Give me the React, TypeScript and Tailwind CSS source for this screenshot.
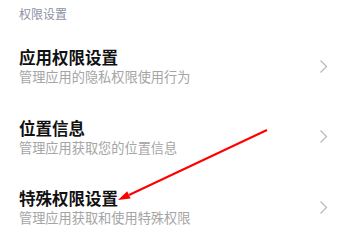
const rows = [
  { title: "应用权限设置", desc: "管理应用的隐私权限使用行为" },
  { title: "位置信息", desc: "管理应用获取您的位置信息" },
  { title: "特殊权限设置", desc: "管理应用获取和使用特殊权限" },
];

function Chevron() {
  return (
    <svg width="9" height="15" viewBox="0 0 9 15" className="shrink-0">
      <polyline points="1.5,1.5 7.5,7.5 1.5,13.5" fill="none" stroke="#b8b8b8" strokeWidth="1.2" />
    </svg>
  );
}

export default function App() {
  return (
    <div
      className="relative w-[344px] h-[235px] overflow-hidden bg-white"
      style={{ fontFamily: '"Noto Sans CJK SC", "Noto Sans", sans-serif' }}
    >
      <div className="h-[31px] pt-[6px] pl-[19px] text-[12px] leading-[16px] text-[#8c91a3]">
        权限设置
      </div>

      {rows.map((r) => (
        <div key={r.title} className="flex h-[70.5px] items-center pl-[19px] pr-[16px]">
          <div className="flex-1">
            <p className="text-[16.5px] leading-[22px] font-semibold text-[#111]">{r.title}</p>
            <p className="text-[13.2px] leading-[18px] text-[#a5a5a5]">{r.desc}</p>
          </div>
          <Chevron />
        </div>
      ))}

      <svg className="absolute inset-0 pointer-events-none" width="344" height="235" viewBox="0 0 344 235">
        <line x1="267" y1="130" x2="129" y2="195" stroke="#ff0000" strokeWidth="2" />
        <polygon points="118,200 127.2,191.3 130.6,198.5" fill="#ff0000" />
      </svg>
    </div>
  );
}
